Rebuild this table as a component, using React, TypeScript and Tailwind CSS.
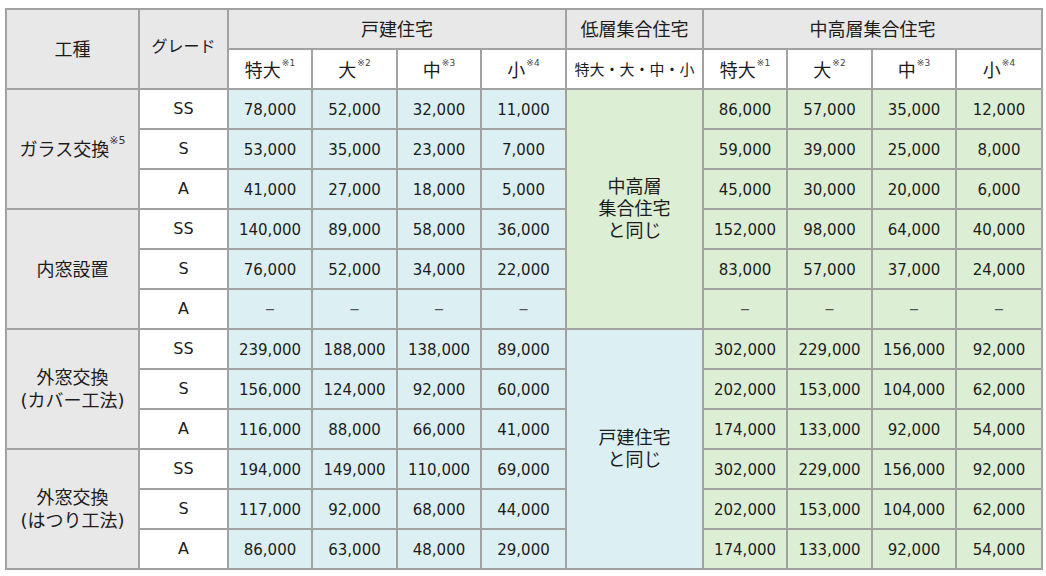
const FONT = 'font-["DejaVu_Sans","Noto_Sans_CJK_JP",sans-serif]';

type Row = { grade: string; house: string[]; mid: string[] };
type Group = { label: React.ReactNode; rows: Row[] };

const D = "–";

const groups: Group[] = [
  {
    label: (
      <>
        ガラス交換<sup className="text-[11px] align-[6px] text-[#333]">※5</sup>
      </>
    ),
    rows: [
      { grade: "SS", house: ["78,000", "52,000", "32,000", "11,000"], mid: ["86,000", "57,000", "35,000", "12,000"] },
      { grade: "S", house: ["53,000", "35,000", "23,000", "7,000"], mid: ["59,000", "39,000", "25,000", "8,000"] },
      { grade: "A", house: ["41,000", "27,000", "18,000", "5,000"], mid: ["45,000", "30,000", "20,000", "6,000"] },
    ],
  },
  {
    label: <>内窓設置</>,
    rows: [
      { grade: "SS", house: ["140,000", "89,000", "58,000", "36,000"], mid: ["152,000", "98,000", "64,000", "40,000"] },
      { grade: "S", house: ["76,000", "52,000", "34,000", "22,000"], mid: ["83,000", "57,000", "37,000", "24,000"] },
      { grade: "A", house: [D, D, D, D], mid: [D, D, D, D] },
    ],
  },
  {
    label: (
      <>
        外窓交換
        <br />
        (カバー工法)
      </>
    ),
    rows: [
      { grade: "SS", house: ["239,000", "188,000", "138,000", "89,000"], mid: ["302,000", "229,000", "156,000", "92,000"] },
      { grade: "S", house: ["156,000", "124,000", "92,000", "60,000"], mid: ["202,000", "153,000", "104,000", "62,000"] },
      { grade: "A", house: ["116,000", "88,000", "66,000", "41,000"], mid: ["174,000", "133,000", "92,000", "54,000"] },
    ],
  },
  {
    label: (
      <>
        外窓交換
        <br />
        (はつり工法)
      </>
    ),
    rows: [
      { grade: "SS", house: ["194,000", "149,000", "110,000", "69,000"], mid: ["302,000", "229,000", "156,000", "92,000"] },
      { grade: "S", house: ["117,000", "92,000", "68,000", "44,000"], mid: ["202,000", "153,000", "104,000", "62,000"] },
      { grade: "A", house: ["86,000", "63,000", "48,000", "29,000"], mid: ["174,000", "133,000", "92,000", "54,000"] },
    ],
  },
];

const sizes: [string, string][] = [
  ["特大", "※1"],
  ["大", "※2"],
  ["中", "※3"],
  ["小", "※4"],
];

const cell = "border-2 border-[#a2a2a2] text-center align-middle p-0";

function Value({ v, bg }: { v: string; bg: string }) {
  const dash = v === D;
  return (
    <td className={`${cell} ${bg} ${dash ? "text-[20px] text-[#555] pb-[2px]" : "text-[15px] pt-[3px]"}`}>{v}</td>
  );
}

function SizeHead({ name, note }: { name: string; note: string }) {
  return (
    <th className={`${cell} bg-white font-normal text-[18px] pt-[2px]`}>
      {name}
      <sup className="text-[9px] align-[6px] text-[#444] ml-[1px]">{note}</sup>
    </th>
  );
}

export default function App() {
  return (
    <div className={`w-[1046px] h-[576px] bg-white pt-[8px] pl-[5px] text-[#1c1c1c] ${FONT}`}>
      <table className="table-fixed border-collapse w-[1036px]">
        <colgroup>
          <col className="w-[133px]" />
          <col className="w-[89px]" />
          <col className="w-[84px]" />
          <col className="w-[85px]" />
          <col className="w-[84px]" />
          <col className="w-[85px]" />
          <col className="w-[137px]" />
          <col className="w-[84px]" />
          <col className="w-[85px]" />
          <col className="w-[84px]" />
          <col className="w-[86px]" />
        </colgroup>
        <thead>
          <tr className="h-[40px] bg-[#e8e8e8]">
            <th rowSpan={2} className={`${cell} font-normal text-[18px]`}>
              工種
            </th>
            <th rowSpan={2} className={`${cell} font-normal text-[16px] pb-[4px]`}>
              グレード
            </th>
            <th colSpan={4} className={`${cell} font-normal text-[18px]`}>
              戸建住宅
            </th>
            <th className={`${cell} font-normal text-[18px]`}>低層集合住宅</th>
            <th colSpan={4} className={`${cell} font-normal text-[18px]`}>
              中高層集合住宅
            </th>
          </tr>
          <tr className="h-[40px]">
            {sizes.map(([n, s]) => (
              <SizeHead key={"h" + n} name={n} note={s} />
            ))}
            <th className={`${cell} bg-white font-normal text-[15px] pt-[2px]`}>特大・大・中・小</th>
            {sizes.map(([n, s]) => (
              <SizeHead key={"m" + n} name={n} note={s} />
            ))}
          </tr>
        </thead>
        <tbody>
          {groups.map((g, gi) =>
            g.rows.map((r, ri) => (
              <tr key={`${gi}-${ri}`} className="h-[40px]">
                {ri === 0 && (
                  <td rowSpan={3} className={`${cell} bg-[#e8e8e8] text-[18px] leading-[23px]`}>
                    {g.label}
                  </td>
                )}
                <td className={`${cell} bg-white text-[16px]`}>{r.grade}</td>
                {r.house.map((v, i) => (
                  <Value key={"h" + i} v={v} bg="bg-[#dcf0f3]" />
                ))}
                {gi === 0 && ri === 0 && (
                  <td rowSpan={6} className={`${cell} bg-[#dcefd5] text-[18px] leading-[22px]`}>
                    中高層
                    <br />
                    集合住宅
                    <br />
                    と同じ
                  </td>
                )}
                {gi === 2 && ri === 0 && (
                  <td rowSpan={6} className={`${cell} bg-[#dcf0f3] text-[18px] leading-[22px]`}>
                    戸建住宅
                    <br />
                    と同じ
                  </td>
                )}
                {r.mid.map((v, i) => (
                  <Value key={"m" + i} v={v} bg="bg-[#dcefd5]" />
                ))}
              </tr>
            ))
          )}
        </tbody>
      </table>
    </div>
  );
}
